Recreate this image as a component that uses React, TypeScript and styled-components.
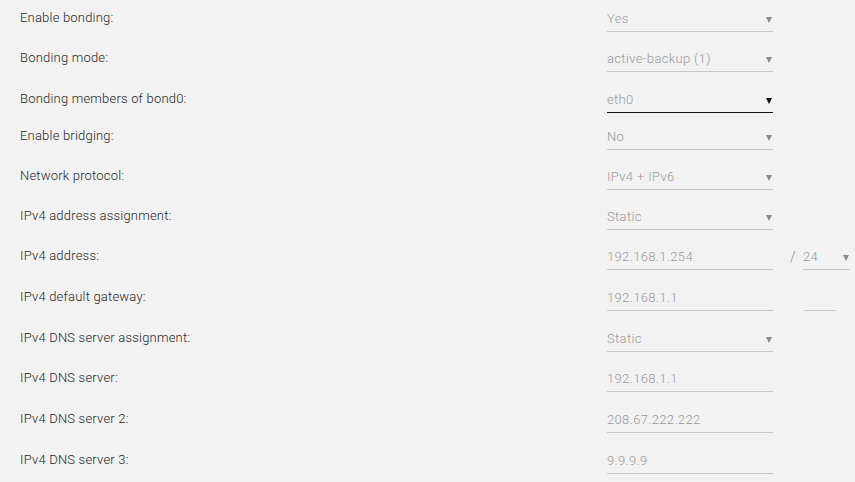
import React from "react";
import styled, { createGlobalStyle } from "styled-components";

const Global = createGlobalStyle`
  html, body { margin: 0; padding: 0; background: #f2f2f2; }
  body { font-family: Roboto, "Noto Sans", sans-serif; font-size: 13px; }
`;

const Page = styled.div`
  width: 855px;
  height: 482px;
  overflow: hidden;
  background: #f2f2f2;
`;

const Row = styled.div<{ $h: number }>`
  display: grid;
  grid-template-columns: 587px 166px 30px 48px;
  height: ${(p) => p.$h}px;
  padding-left: 20px;
  align-items: start;
`;

const Label = styled.div`
  color: #262626;
  line-height: 16px;
  padding-top: 10px;
  white-space: nowrap;
  font-weight: 300;
  letter-spacing: 0.2px;
`;

const Field = styled.div<{ $focused?: boolean }>`
  display: flex;
  align-items: flex-start;
  justify-content: space-between;
  height: 23px;
  margin-top: 9px;
  padding-top: 2px;
  box-sizing: border-box;
  border-bottom: 1px solid ${(p) => (p.$focused ? "#111" : "#c8c8c8")};
  color: #999;
  font-weight: 300;
`;

const Value = styled.span`
  line-height: 16px;
  letter-spacing: 0.35px;
`;

const Arrow = styled.span<{ $focused?: boolean }>`
  width: 0;
  height: 0;
  margin-top: 6px;
  border-left: 3px solid transparent;
  border-right: 3px solid transparent;
  border-top: 6px solid ${(p) => (p.$focused ? "#111" : "#8a8a8a")};
  margin-right: 1px;
`;

const Slash = styled.div`
  color: #8a8a8a;
  padding-top: 11px;
  padding-left: 17px;
  font-size: 14px;
  line-height: 16px;
  font-weight: 300;
`;

const SmallField = styled(Field)<{ $w: number }>`
  width: ${(p) => p.$w}px;
  margin-left: ${(p) => (p.$w < 40 ? 1 : 0)}px;
`;

type RowData = {
  label: string;
  value: string;
  select?: boolean;
  focused?: boolean;
  h: number;
  extra?: "prefix" | "blank";
};

const rows: RowData[] = [
  { label: "Enable bonding:", value: "Yes", select: true, h: 40 },
  { label: "Bonding mode:", value: "active-backup (1)", select: true, h: 41 },
  { label: "Bonding members of bond0:", value: "eth0", select: true, focused: true, h: 37 },
  { label: "Enable bridging:", value: "No", select: true, h: 40 },
  { label: "Network protocol:", value: "IPv4 + IPv6", select: true, h: 40 },
  { label: "IPv4 address assignment:", value: "Static", select: true, h: 40 },
  { label: "IPv4 address:", value: "192.168.1.254", h: 41, extra: "prefix" },
  { label: "IPv4 default gateway:", value: "192.168.1.1", h: 41, extra: "blank" },
  { label: "IPv4 DNS server assignment:", value: "Static", select: true, h: 40 },
  { label: "IPv4 DNS server:", value: "192.168.1.1", h: 41 },
  { label: "IPv4 DNS server 2:", value: "208.67.222.222", h: 41 },
  { label: "IPv4 DNS server 3:", value: "9.9.9.9", h: 41 },
];

export default function App() {
  return (
    <>
      <Global />
      <Page>
        {rows.map((r) => (
          <Row key={r.label} $h={r.h}>
            <Label>{r.label}</Label>
            <Field $focused={r.focused}>
              <Value>{r.value}</Value>
              {r.select && <Arrow $focused={r.focused} />}
            </Field>
            {r.extra === "prefix" && <Slash>/</Slash>}
            {r.extra === "prefix" && (
              <SmallField $w={47}>
                <Value>24</Value>
                <Arrow />
              </SmallField>
            )}
            {r.extra === "blank" && <span />}
            {r.extra === "blank" && <SmallField $w={32} />}
          </Row>
        ))}
      </Page>
    </>
  );
}
